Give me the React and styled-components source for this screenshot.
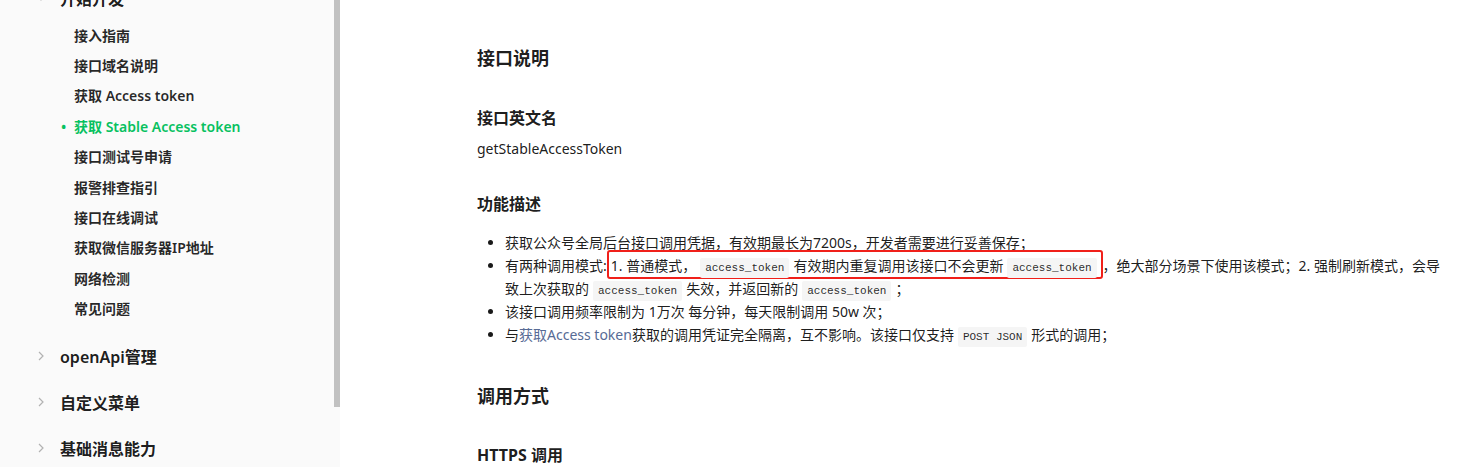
import React from "react";
import styled, { createGlobalStyle } from "styled-components";

const GlobalStyle = createGlobalStyle`
  html, body {
    margin: 0;
    padding: 0;
    background: #fff;
  }
  body {
    font-family: "Noto Sans", "Noto Sans CJK SC", sans-serif;
    color: rgba(0, 0, 0, 0.9);
  }
`;

const Page = styled.div`
  display: flex;
  height: 467px;
  overflow: hidden;
`;

const Sidebar = styled.aside`
  width: 340px;
  flex-shrink: 0;
  display: flex;
  background: #fafafa;
`;

const Nav = styled.nav`
  flex: 1;
  margin-top: -25px;
`;

const Track = styled.div`
  width: 6px;
`;

const Thumb = styled.div`
  height: 407px;
  background: #c1c1c1;
`;

const GroupHead = styled.div`
  display: flex;
  align-items: center;
  height: 45.7px;
  padding-left: 34px;
  font-size: 16px;
  font-weight: 600;
  color: rgba(0, 0, 0, 0.9);
`;

const Chevron = styled.span`
  display: flex;
  align-items: center;
  justify-content: center;
  width: 14px;
  margin-right: 12px;
  color: #b2b2b2;
`;

const SubList = styled.ul`
  list-style: none;
  margin: 0;
  padding: 0 0 9px;
`;

const SubItem = styled.li`
  position: relative;
  height: 30.4px;
  line-height: 30.4px;
  padding-left: 74px;
  font-size: 14px;
  font-weight: 600;
  color: ${({ $active }) => ($active ? "#07c160" : "rgba(0, 0, 0, 0.85)")};

  &::before {
    content: ${({ $active }) => ($active ? '"•"' : "none")};
    position: absolute;
    left: 61px;
  }
`;

const Main = styled.main`
  flex: 1;
  padding: 0 20px 0 137px;
  min-width: 0;
`;

const CutTitle = styled.h1`
  margin: -26px 0 0;
  font-size: 20px;
  line-height: 30px;
  font-weight: 600;
`;

const H2 = styled.h2`
  margin: ${({ $mt }) => $mt}px 0 0;
  font-size: 18px;
  line-height: 26px;
  font-weight: 700;
`;

const H3 = styled.h3`
  margin: ${({ $mt }) => $mt}px 0 0;
  font-size: 16px;
  line-height: 24px;
  font-weight: 700;
`;

const Para = styled.p`
  margin: 8px 0 0;
  font-size: 14px;
  line-height: 22px;
`;

const List = styled.ul`
  margin: 15px 0 0;
  padding-left: 28px;
  font-size: 14px;
  line-height: 23px;
`;

const Code = styled.code`
  font-family: "Liberation Mono", monospace;
  font-size: 11px;
  line-height: 1;
  background: #f5f5f5;
  padding: 4px 5px;
  margin: 0 4px;
  border-radius: 2px;
  color: rgba(0, 0, 0, 0.85);
`;

const Mark = styled.span`
  border: 2px solid #f0201a;
  border-radius: 3px;
  padding: 4px 0 2px 2px;
`;

const Link = styled.a`
  color: #576b95;
  text-decoration: none;
`;

const ChevronRight = () => (
  <svg width="6" height="10" viewBox="0 0 6 10">
    <polyline points="1,1 5,5 1,9" fill="none" stroke="currentColor" strokeWidth="1.2" />
  </svg>
);

const ChevronDown = () => (
  <svg width="12" height="7" viewBox="0 0 12 7">
    <polyline points="1,1 6,6 11,1" fill="none" stroke="currentColor" strokeWidth="1.2" />
  </svg>
);

const devItems = [
  "接入指南",
  "接口域名说明",
  "获取 Access token",
  "获取 Stable Access token",
  "接口测试号申请",
  "报警排查指引",
  "接口在线调试",
  "获取微信服务器IP地址",
  "网络检测",
  "常见问题",
];

const groups = ["openApi管理", "自定义菜单", "基础消息能力"];

export default function App() {
  return (
    <>
      <GlobalStyle />
      <Page>
        <Sidebar>
          <Nav>
            <GroupHead>
              <Chevron>
                <ChevronDown />
              </Chevron>
              开始开发
            </GroupHead>
            <SubList>
              {devItems.map((item, i) => (
                <SubItem key={item} $active={i === 3}>
                  {item}
                </SubItem>
              ))}
            </SubList>
            {groups.map((g) => (
              <GroupHead key={g}>
                <Chevron>
                  <ChevronRight />
                </Chevron>
                {g}
              </GroupHead>
            ))}
          </Nav>
          <Track>
            <Thumb />
          </Track>
        </Sidebar>
        <Main>
          <CutTitle>获取稳定版接口调用凭据</CutTitle>
          <H2 $mt={41}>接口说明</H2>
          <H3 $mt={35}>接口英文名</H3>
          <Para>getStableAccessToken</Para>
          <H3 $mt={32}>功能描述</H3>
          <List>
            <li>获取公众号全局后台接口调用凭据，有效期最长为7200s，开发者需要进行妥善保存；</li>
            <li>
              有两种调用模式:
              <Mark>
                1. 普通模式，<Code>access_token</Code>有效期内重复调用该接口不会更新<Code>access_token</Code>
              </Mark>
              ，绝大部分场景下使用该模式；2. 强制刷新模式，会导致上次获取的<Code>access_token</Code>失效，并返回新的<Code>access_token</Code>；
            </li>
            <li>该接口调用频率限制为 1万次 每分钟，每天限制调用 50w 次；</li>
            <li>
              与<Link>获取Access token</Link>获取的调用凭证完全隔离，互不影响。该接口仅支持<Code>POST JSON</Code>形式的调用；
            </li>
          </List>
          <H2 $mt={37}>调用方式</H2>
          <H3 $mt={34}>HTTPS 调用</H3>
        </Main>
      </Page>
    </>
  );
}
